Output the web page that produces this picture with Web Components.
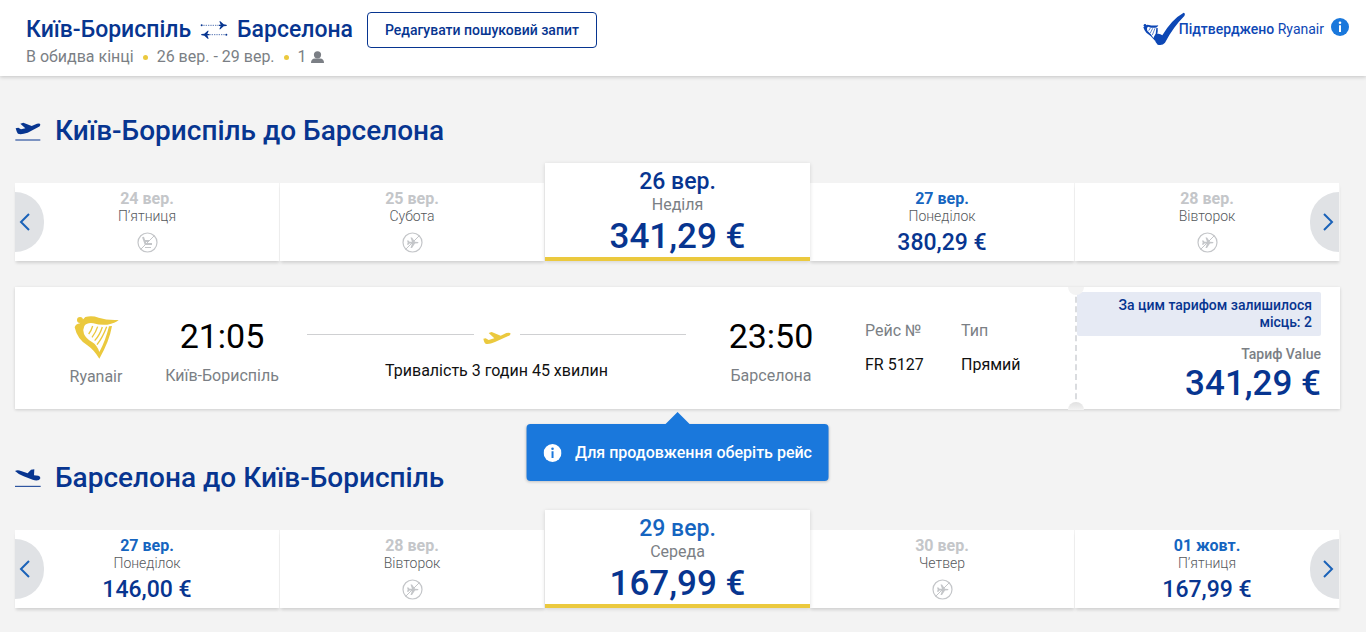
<!DOCTYPE html>
<html lang="uk">
<head>
<meta charset="utf-8">
<meta name="viewport" content="width=device-width, initial-scale=1">
<title>Вибір рейсів</title>
<style>
  :root {
    --navy: #073590;
    --blue: #1a78dc;
    --link: #1565c0;
    --yellow: #ebc93e;
    --grey: #7b7f85;
    --pale: #c4c6c9;
    --page: #f3f3f3;
  }
  body { margin: 0; background: var(--page); font-family: Roboto, "Liberation Sans", sans-serif; font-size: 16px; color: #111; }
  main { display: flex; flex-direction: column; gap: 51px; padding: 37px 26px 23px 15px; }
</style>
</head>
<body>
<trip-header from="Київ-Бориспіль" to="Барселона">
  <span>В обидва кінці</span>
  <span>26 вер. - 29 вер.</span>
</trip-header>
<main>
  <journey-section icon="takeoff" heading="Київ-Бориспіль до Барселона">
    <date-carousel>
      <date-card date="24 вер." day="П’ятниця" state="soldout"></date-card>
      <date-card date="25 вер." day="Субота" state="noflight"></date-card>
      <date-card date="26 вер." day="Неділя" price="341,29 €" selected></date-card>
      <date-card date="27 вер." day="Понеділок" price="380,29 €"></date-card>
      <date-card date="28 вер." day="Вівторок" state="noflight"></date-card>
    </date-carousel>
    <flight-card>
      <hint-bubble>Для продовження оберіть рейс</hint-bubble>
    </flight-card>
  </journey-section>
  <journey-section icon="landing" heading="Барселона до Київ-Бориспіль">
    <date-carousel>
      <date-card date="27 вер." day="Понеділок" price="146,00 €"></date-card>
      <date-card date="28 вер." day="Вівторок" state="noflight"></date-card>
      <date-card date="29 вер." day="Середа" price="167,99 €" selected available></date-card>
      <date-card date="30 вер." day="Четвер" state="noflight"></date-card>
      <date-card date="01 жовт." day="П’ятниця" price="167,99 €"></date-card>
    </date-carousel>
  </journey-section>
</main>

<script>
const ICONS = {
  takeoff: `<svg width="26" height="22" viewBox="0 0 78 66"><path fill="currentColor" d="M2 25 L10 23 L18 28 L31 25 L16 11 L25 8 L50 18 L66 11 Q76 9 76 14 Q76 19 69 22 L38 38 Q17 45 9 41 Q6 39 2 25Z"/><path stroke="currentColor" stroke-width="3" d="M1 60H76"/></svg>`,
  landing: `<svg width="26" height="22" viewBox="0 0 78 66"><path fill="currentColor" d="M0 12 Q8 8 18 12 L38 19 L48 8 L58 7 L57 25 L70 26 Q77 28 76 34 L72 39 Q63 42 53 38 L26 28 Q10 22 0 12Z"/><path stroke="currentColor" stroke-width="3" d="M0 58H77"/></svg>`,
  plane: `<svg width="28" height="14" viewBox="0 0 84 42"><path fill="currentColor" d="M1 23 L8 22 L17 27 L34 22 L17 6 L26 3 L53 14 L70 6 Q81 3 83 8 Q82 13 74 16 L36 33 Q17 41 8 38 Q4 37 1 23Z"/></svg>`,
  swap: `<svg width="28" height="18" viewBox="0 0 84 54" fill="currentColor"><path d="M56 11 L62 11 L58 1 L61 1 L71 10 L79 11 Q83 13 79 15 L71 16 L61 25 L58 25 L62 15 L56 15Z M28 39 L22 39 L26 29 L23 29 L13 38 L5 39 Q1 41 5 43 L13 44 L23 53 L26 53 L22 43 L28 43Z"/><circle cx="5" cy="13" r="3"/><circle cx="79" cy="41" r="3"/><path d="M10 13H54M28 41H76" stroke="currentColor" stroke-width="2" stroke-dasharray="4 3"/></svg>`,
  person: `<svg width="13" height="12" viewBox="0 0 13 12" fill="currentColor"><circle cx="6.500" cy="3.800" r="3.600"/><path d="M0 12Q0 7.500 4 7.500L9 7.500Q13 7.500 13 12Z"/></svg>`,
  info: `<svg width="18" height="18" viewBox="0 0 18 18"><circle cx="9" cy="9" r="9" fill="currentColor"/><g fill="var(--hole, #fff)"><circle cx="9" cy="4.700" r="1.300"/><path d="M8 7.200h2V14H8z"/></g></svg>`,
  soldout: `<svg width="21" height="21" viewBox="0 0 21 21" fill="none" stroke="currentColor"><circle cx="10.500" cy="10.500" r="9.500" stroke-width="1.200"/><path d="M17.300 3.700 3.700 17.300"/><path d="M6 5 8.500 12H15M8 9H12" stroke-width="2"/><path d="M8 15.500H14"/></svg>`,
  noflight: `<svg width="21" height="21" viewBox="0 0 21 21" fill="none" stroke="currentColor"><circle cx="10.500" cy="10.500" r="9.500" stroke-width="1.200"/><path d="M17.300 3.700 3.700 17.300"/><path fill="currentColor" stroke="none" d="M5 8.500 6.500 8.500 7.500 9.700 10 9.700 8.500 5.500 10 5.500 13 9.700 16 10 Q17 10.700 16 11.300 L13 11.500 10 16 8.500 16 10 11.500 7.500 11.500 6.500 12.800 5 12.800 5.700 10.600Z"/></svg>`,
  prev: `<svg width="12" height="20" viewBox="0 0 12 20" fill="none" stroke="currentColor" stroke-width="2"><path d="M10 2 2 10 10 18"/></svg>`,
  next: `<svg width="12" height="20" viewBox="0 0 12 20" fill="none" stroke="currentColor" stroke-width="2"><path d="M2 2 10 10 2 18"/></svg>`,
  harp: `<svg width="45" height="44" viewBox="222 105 135 132"><g fill="currentColor"><circle cx="240" cy="120" r="9"/><path d="M224 142 Q227 132 240 130 Q246 120 256 111 Q276 106 296 113 Q322 122 356 120 Q346 130 322 134 Q300 136 280 130 Q262 127 253 138 Q247 150 252 162 Q258 176 276 186 Q292 196 298 216 Q316 184 327 139 L336 138 Q328 184 298 236 Q282 210 262 196 Q232 178 224 142Z"/></g><g stroke="currentColor" stroke-width="4" fill="none"><path d="M278 138 Q274 152 266 162M293 140 Q288 156 276 172M307 141 Q299 166 284 182M320 140 Q308 172 291 194"/></g></svg>`,
  verified: `<svg width="42" height="34" viewBox="0 0 126 102"><path fill="currentColor" d="M36 68 Q48 62 58 70 Q86 22 122 2 Q128 4 124 12 Q90 46 66 92 Q58 102 44 98 Q36 90 34 78Z"/><g fill="currentColor"><circle cx="6" cy="40" r="4"/><path d="M1 46 Q6 38 14 38 Q30 42 46 40 L42 46 Q28 50 16 44 Q10 46 13 56 Q26 66 31 78 L38 66 40 48 44 48 Q46 66 36 86 Q26 72 10 62 Q3 54 1 46Z"/></g><path stroke="currentColor" stroke-width="2" d="M22 48 17 56M29 49 22 63M36 49 28 69"/></svg>`
};
const icon = name => `<span class="icon" aria-hidden="true">${ICONS[name]}</span>`;
const BASE = `*{box-sizing:border-box}.icon{display:inline-flex;flex:none}svg{display:block}button{font:inherit;cursor:pointer}`;

class Part extends HTMLElement {
  connectedCallback() {
    if (this.shadowRoot) return;
    const t = document.createElement('template');
    t.innerHTML = `<style>${BASE}${this.css()}</style>${this.html()}`;
    this.attachShadow({ mode: 'open' }).append(t.content.cloneNode(true));
  }
  at(name) { return this.getAttribute(name) || ''; }
}

customElements.define('trip-header', class extends Part {
  css() { return `
    :host{display:block;background:#fff;box-shadow:0 1px 4px rgba(0,0,0,.2)}
    header{display:flex;align-items:flex-start;min-height:76px;padding:12px 17px 8px 26px}
    h1{display:flex;align-items:center;gap:9px;margin:0;font-size:23px;line-height:35px;font-weight:500;color:var(--navy)}
    .details{display:flex;align-items:center;line-height:20px;color:var(--grey)}
    ::slotted(span)::after{content:"";display:inline-block;vertical-align:middle;width:5px;height:5px;margin:0 9px;border-radius:50%;background:var(--yellow)}
    .pax{display:inline-flex;align-items:center;gap:4px}
    .edit{height:36px;margin-left:14px;padding:0 17px;border:1px solid var(--navy);border-radius:4px;background:#fff;color:var(--navy);font-size:14px;font-weight:500}
    .verified{display:flex;align-items:center;margin-left:auto;font-size:14px;line-height:35px;color:#0d47b5}
    .verified>.icon{align-self:flex-start}
    .verified p{margin:0 7px 0 -6px}
    .info{display:flex;margin-bottom:6px;padding:0;border:0;background:none;color:var(--blue)}
    b{font-weight:500}`; }
  html() { return `<header>
    <div>
      <h1><span>${this.at('from')}</span>${icon('swap')}<span>${this.at('to')}</span></h1>
      <div class="details"><slot></slot><span class="pax">1 ${icon('person')}</span></div>
    </div>
    <button class="edit" type="button">Редагувати пошуковий запит</button>
    <div class="verified">${icon('verified')}<p><b>Підтверджено</b> Ryanair</p><button class="info" type="button" aria-label="Інформація">${icon('info')}</button></div>
  </header>`; }
});

customElements.define('journey-section', class extends Part {
  css() { return `
    :host{display:block}
    h2{display:flex;align-items:center;gap:14px;margin:0 0 14px;font-size:28px;line-height:36px;font-weight:500;color:var(--navy)}
    .body{display:flex;flex-direction:column;gap:26px}`; }
  html() { return `<section><h2>${icon(this.at('icon'))}<span>${this.at('heading')}</span></h2><div class="body"><slot></slot></div></section>`; }
});

customElements.define('date-carousel', class extends Part {
  css() { return `
    :host{display:block;position:relative}
    .strip{display:grid;grid-template-columns:repeat(5,minmax(0,1fr));align-items:end}
    button{position:absolute;bottom:9px;z-index:2;display:flex;align-items:center;justify-content:center;width:29px;height:60px;padding:0;border:0;background:#e0e2e5;color:#1a62b8}
    .prev{left:0;border-radius:0 30px 30px 0;padding-right:10px}
    .next{right:1px;border-radius:30px 0 0 30px;padding-left:6px}`; }
  html() { return `<div class="strip"><slot></slot></div>
    <button class="prev" type="button" aria-label="Попередні дати">${icon('prev')}</button>
    <button class="next" type="button" aria-label="Наступні дати">${icon('next')}</button>`; }
});

customElements.define('date-card', class extends Part {
  css() { return `
    :host{display:block;text-align:center;background:#fff;border-right:1px solid #f3f3f3;box-shadow:0 3px 3px -1px rgba(0,0,0,.14)}
    button{display:flex;flex-direction:column;align-items:center;width:100%;min-height:78px;padding:7px 0 0;border:0;background:#fff;color:inherit}
    .date{font-size:16px;line-height:18px;font-weight:700;color:var(--link)}
    .day{font-size:14px;line-height:16px;font-weight:300;color:#55585c}
    .price{margin-top:6px;font-size:23px;line-height:26px;font-weight:500;color:var(--navy)}
    .icon{margin-top:8px;color:var(--pale)}
    :host([state]) .date{color:var(--pale)}
    :host([selected]){position:relative;z-index:1;border:0;box-shadow:0 1px 4px rgba(0,0,0,.14)}
    :host([selected]) button{min-height:98px;padding:5px 0 0;border-bottom:4px solid var(--yellow)}
    :host([selected]) .date{font-size:23px;line-height:28px;font-weight:500;color:var(--navy)}
    :host([selected][available]) .date{color:var(--link)}
    :host([selected]) .day{font-size:16px;line-height:18px;font-weight:400;color:var(--grey)}
    :host([selected]) .price{margin-top:2px;font-size:35px;line-height:41px}`; }
  html() {
    const state = this.at('state');
    return `<button type="button"${state ? ' disabled' : ''}><span class="date">${this.at('date')}</span><span class="day">${this.at('day')}</span>${state ? icon(state) : `<span class="price">${this.at('price')}</span>`}</button>`;
  }
});

customElements.define('flight-card', class extends Part {
  css() { return `
    :host{display:block;position:relative}
    article{display:grid;grid-template-columns:4fr 1fr;min-height:122px;background:#fff;box-shadow:0 1px 3px rgba(0,0,0,.16)}
    .main{display:flex;align-items:flex-start;padding:28px 0 0 41px}
    .airline,.stop{display:flex;flex-direction:column;align-items:center;flex:none;line-height:20px;color:var(--grey)}
    .airline{width:80px;margin-right:26px}
    .airline .icon{height:52px;color:var(--yellow)}
    .stop{width:120px}
    .stop time{margin-bottom:9px;font-size:34px;line-height:42px;color:#000}
    .route{flex:1;margin:14px 25px 0;text-align:center;line-height:20px}
    .line{display:flex;align-items:flex-start;gap:9px;height:32px;padding-top:5px}
    .line::before,.line::after{content:"";flex:1;height:1px;background:#cfd0d2}
    .line .icon{margin:-3px 0;color:var(--yellow)}
    dl{display:flex;flex:none;margin:6px 0 0 34px;line-height:20px}
    dl div{width:96px} dl div:last-child{width:114px}
    dt{margin-bottom:14px;color:var(--grey)} dd{margin:0}
    .fare{position:relative;display:flex;flex-direction:column;padding:5px 19px 0 0;border-left:2px dashed #dadcdf;text-align:right}
    .fare::before,.fare::after{content:"";position:absolute;left:-9px;width:16px;height:8px;background:var(--page)}
    .fare::before{top:0;border-radius:0 0 8px 8px}
    .fare::after{bottom:-1px;border-radius:8px 8px 0 0;background:linear-gradient(#e0e0e0,var(--page))}
    .left{margin:0 0 9px;padding:5px 9px 5px 40px;border-radius:2px;background:#e6eaf4;color:var(--navy);font-size:14px;line-height:17px;font-weight:500}
    .name{font-size:14px;line-height:18px;font-weight:500;color:var(--grey)}
    .price{font-size:35px;line-height:42px;font-weight:500;color:var(--navy)}`; }
  html() { return `<article>
    <div class="main">
      <div class="airline">${icon('harp')}<span>Ryanair</span></div>
      <div class="stop"><time>21:05</time><span>Київ-Бориспіль</span></div>
      <div class="route"><div class="line">${icon('plane')}</div><span>Тривалість 3 годин 45 хвилин</span></div>
      <div class="stop"><time>23:50</time><span>Барселона</span></div>
      <dl><div><dt>Рейс №</dt><dd>FR 5127</dd></div><div><dt>Тип</dt><dd>Прямий</dd></div></dl>
    </div>
    <div class="fare"><p class="left">За цим тарифом залишилося місць: 2</p><span class="name">Тариф Value</span><span class="price">341,29 €</span></div>
  </article><slot></slot>`; }
});

customElements.define('hint-bubble', class extends Part {
  css() { return `
    :host{position:absolute;z-index:3;top:calc(100% + 15px);left:50%;transform:translateX(-50%);--hole:var(--blue)}
    div{display:flex;align-items:center;gap:14px;padding:18px 17px;border-radius:4px;background:var(--blue);color:#fff;font-weight:500;line-height:21px;white-space:nowrap;box-shadow:0 1px 3px rgba(0,0,0,.2)}
    div::before{content:"";position:absolute;left:50%;bottom:100%;margin-left:-12px;border:solid transparent;border-width:0 12px 12px;border-bottom-color:var(--blue)}`; }
  html() { return `<div role="status">${icon('info')}<span><slot></slot></span></div>`; }
});
</script>
</body>
</html>
